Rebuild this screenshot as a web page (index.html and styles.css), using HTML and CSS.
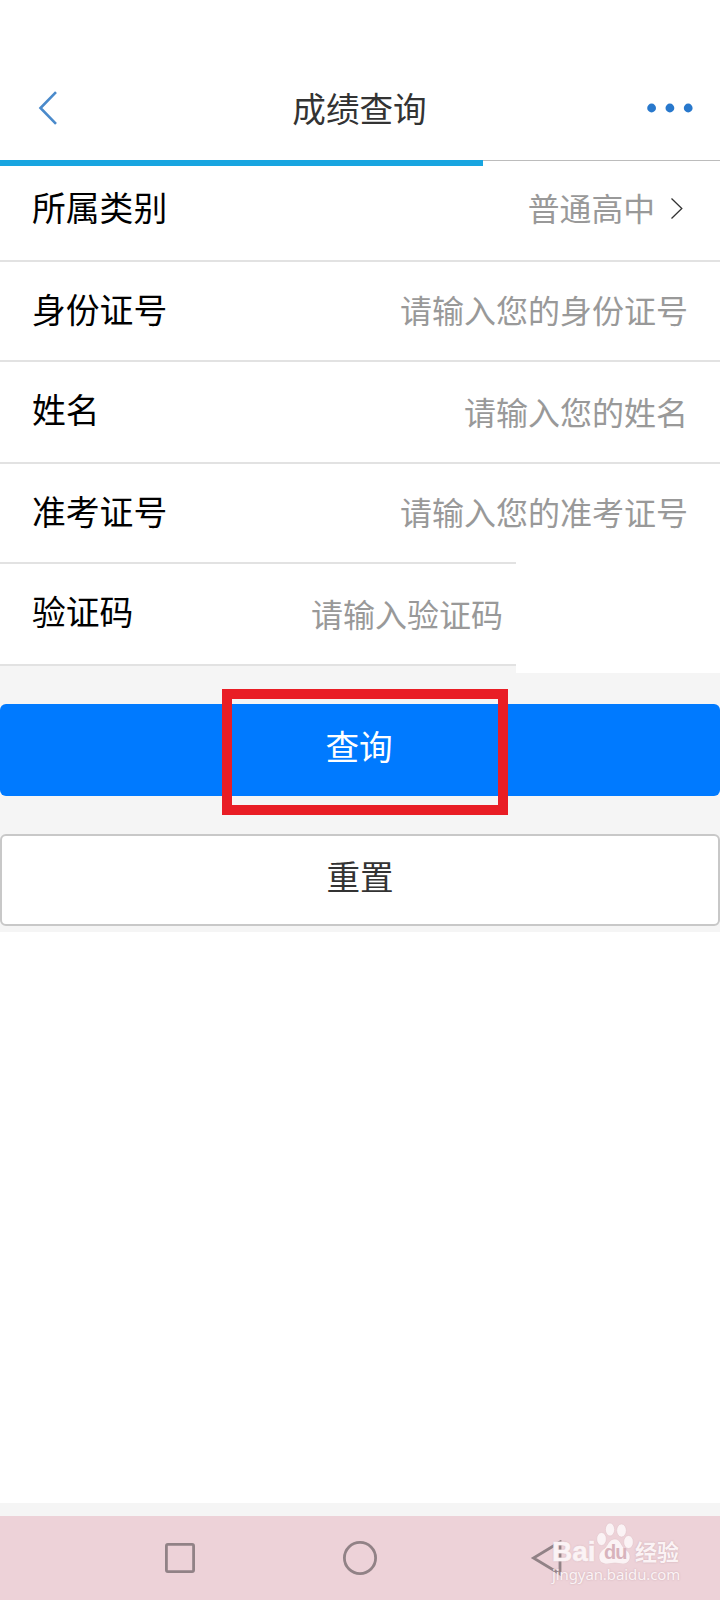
FILE: index.html
```html
<!DOCTYPE html>
<html lang="zh-CN">
<head>
<meta charset="utf-8">
<title>成绩查询</title>
<link rel="stylesheet" href="styles.css">
</head>
<body>
<div class="screen">
  <header class="header">
    <svg class="back" width="20" height="36" viewBox="0 0 20 36"><path d="M18 2.200 2.500 18 18 33.800" /></svg>
    <h1 class="title">成绩查询</h1>
    <svg class="more" width="48" height="12" viewBox="0 0 48 12"><circle cx="4.600" cy="6" r="4.400"/><circle cx="22.900" cy="6" r="4.400"/><circle cx="41.200" cy="6" r="4.400"/></svg>
    <div class="progress"></div>
  </header>
  <main class="form">
    <div class="row row-type"><span class="label">所属类别</span><span class="value">普通高中</span><svg class="chevron" width="14" height="24" viewBox="0 0 14 24"><path d="M1.500 1.500 11.800 11.500l-10.300 10"/></svg></div>
    <div class="row"><span class="label">身份证号</span><span class="value">请输入您的身份证号</span></div>
    <div class="row row-tall"><span class="label">姓名</span><span class="value value-low">请输入您的姓名</span></div>
    <div class="row"><span class="label">准考证号</span><span class="value">请输入您的准考证号</span></div>
    <div class="row row-tall row-code"><span class="label">验证码</span><span class="value value-low">请输入验证码</span></div>
    <div class="captcha"></div>
  </main>
  <div class="actions">
    <div class="btn btn-primary">查询</div>
    <div class="btn btn-plain">重置</div>
    <div class="highlight"></div>
  </div>
  <div class="blank"></div>
  <footer class="navbar">
    <svg class="nav-icon" width="36" height="36" viewBox="0 0 36 36"><rect x="4.400" y="4.400" width="27.200" height="27.200" rx="1.500"/></svg>
    <svg class="nav-icon" width="36" height="36" viewBox="0 0 36 36"><circle cx="18" cy="18" r="15.600"/></svg>
    <svg class="nav-icon nav-back" width="36" height="36" viewBox="0 0 36 36"><path d="M30 2 3.500 18 30 34Z"/></svg>
    <div class="watermark">
      <div class="brand">
        <span class="brand-bai">Bai</span>
        <span class="paw">
          <svg width="38" height="42" viewBox="0 0 38 42"><ellipse cx="5.500" cy="17" rx="4.800" ry="6.500"/><ellipse cx="14" cy="7.500" rx="4.600" ry="6.500"/><ellipse cx="25.500" cy="8.500" rx="4.800" ry="6.500"/><ellipse cx="32.500" cy="20" rx="4.800" ry="6.500"/><path d="M19 17c-6 0-7 6-10 9-4 3-6 5-6 9 0 5 4 7 8 7 3 0 5-1 8-1s5 1 8 1c4 0 7-3 7-7 0-5-3-6-6-9s-4-9-9-9Z"/></svg>
          <span class="du">du</span>
        </span>
        <span class="brand-cn">经验</span>
      </div>
      <div class="site">jingyan.baidu.com</div>
    </div>
  </footer>
</div>
</body>
</html>
```
FILE: styles.css
```css
* { box-sizing: border-box; }
body {
  margin: 0;
  background: #fff;
  font-family: "Noto Sans CJK SC", sans-serif;
}
svg { display: block; flex: none; }
.screen {
  width: 720px;
  height: 1600px;
  display: flex;
  flex-direction: column;
  background: #f5f5f5;
  overflow: hidden;
}
.header {
  position: relative;
  height: 161px;
  padding: 56px 25px 0 38px;
  display: flex;
  justify-content: space-between;
  align-items: center;
  background: #fff;
  border-bottom: 1px solid #bcbcbc;
}
.back path { fill: none; stroke: #4a8acb; stroke-width: 2.6; }
.more { fill: #2878cc; }
.title {
  position: absolute;
  left: 0;
  right: 1px;
  top: 83px;
  margin: 0;
  font-size: 33.600px;
  line-height: 50px;
  font-weight: 400;
  text-align: center;
  color: #333;
}
.progress {
  position: absolute;
  left: 0;
  top: 160px;
  width: 483px;
  height: 6px;
  background: #18a5e0;
  z-index: 1;
}
.form { position: relative; }
.row {
  display: flex;
  align-items: center;
  height: 100px;
  padding: 0 32px;
  background: #fff;
  border-bottom: 2px solid #e2e2e2;
}
.row-type { height: 101px; padding: 0 36px 4px 32px; }
.row-tall { height: 102px; }
.row-code { width: 516px; padding-right: 13px; }
.label {
  flex: 1;
  font-size: 33.800px;
  line-height: 50px;
  color: #000;
  padding-bottom: 4px;
}
.row-tall .label { padding-bottom: 6px; }
.value { font-size: 32px; line-height: 48px; color: #999; padding-bottom: 4px; }
.value-low { padding-bottom: 2px; }
.row-type .value { font-size: 31.800px; }
.chevron { margin-left: 15px; }
.chevron path { fill: none; stroke: #333; stroke-width: 1.3; }
.captcha {
  position: absolute;
  right: 0;
  bottom: -7px;
  width: 204px;
  height: 120px;
  background: #fff;
}
.actions {
  position: relative;
  height: 266px;
  padding-top: 38px;
  display: flex;
  flex-direction: column;
  gap: 38px;
}
.btn {
  height: 92px;
  border-radius: 6px;
  font-size: 33.600px;
  line-height: 83px;
  text-align: center;
}
.btn-primary { background: #007aff; color: #fff; padding-right: 2px; }
.btn-plain { background: #fff; color: #333; border: 2px solid #c8c8c8; line-height: 79px; }
.highlight {
  position: absolute;
  left: 222px;
  top: 23px;
  width: 286px;
  height: 126px;
  border: 10px solid #e91d25;
}
.blank { height: 571px; background: #fff; }
.navbar {
  position: relative;
  height: 84px;
  margin-top: 13px;
  padding: 0 153px 0 162px;
  display: flex;
  gap: 144px;
  align-items: center;
  background: #edd2d8;
}
.nav-icon { fill: none; stroke: #918286; stroke-width: 2.8; }
.nav-back { margin-left: 8px; }
.watermark {
  position: absolute;
  left: 552px;
  top: 5px;
  color: #fbf3f5;
  text-shadow: 0 0 2px #c9a9b0;
}
.brand { display: flex; height: 44px; align-items: flex-end; }
.brand-bai {
  width: 46px;
  font: 700 28px/26px "Liberation Sans", sans-serif;
  -webkit-text-stroke: .6px #fbf3f5;
}
.paw { position: relative; width: 38px; height: 43px; margin-left: -2px; }
.paw svg { fill: #fbf3f5; stroke: #dfc0c7; stroke-width: .5; }
.du {
  position: absolute;
  left: 8px;
  top: 19px;
  font: 700 20px/22px "Liberation Sans", sans-serif;
  letter-spacing: -1px;
  color: #d8b3bc;
  text-shadow: none;
}
.brand-cn { font-size: 22px; line-height: 30px; font-weight: 700; margin-left: 1px; }
.site {
  font: 15px/18px "Noto Sans", sans-serif;
  letter-spacing: -.1px;
}
```
